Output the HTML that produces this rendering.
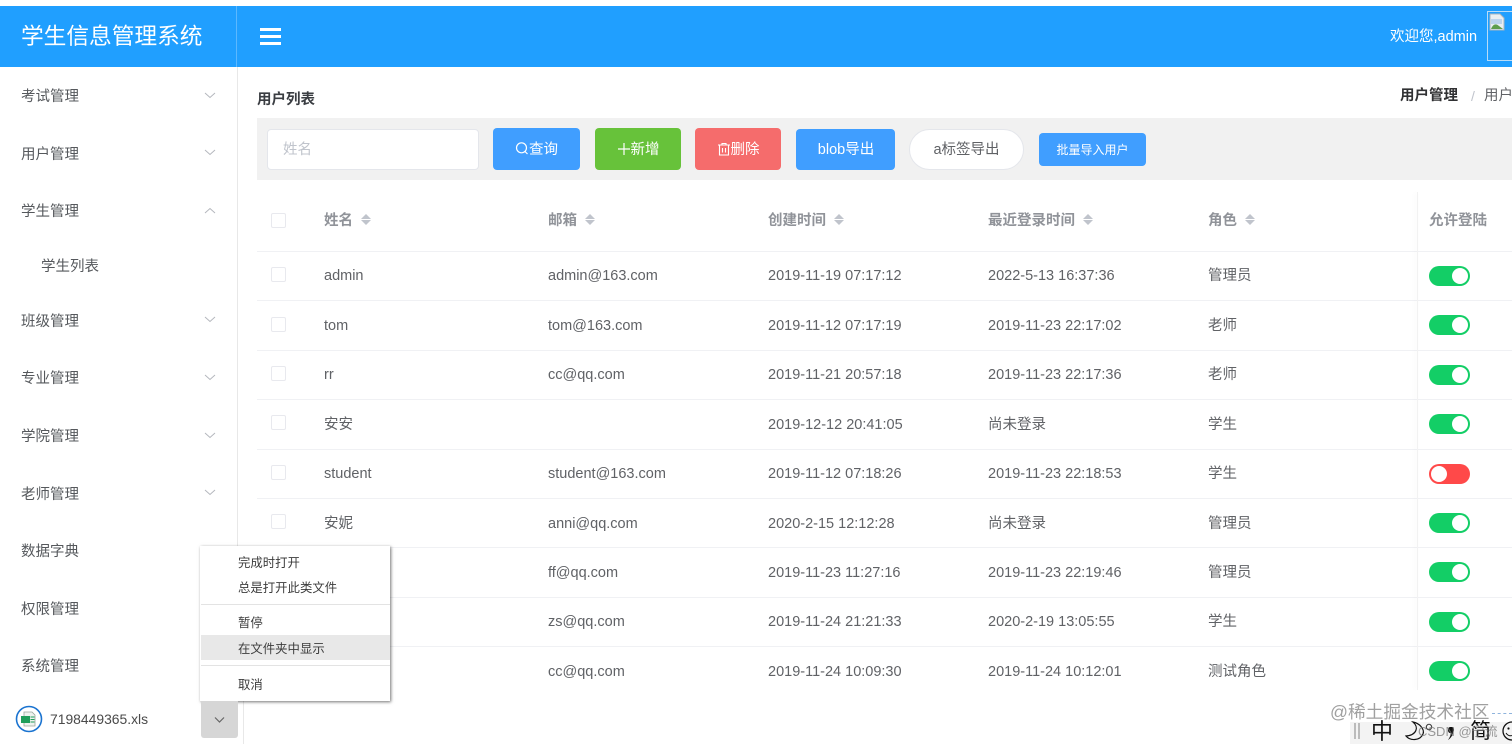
<!DOCTYPE html>
<html lang="zh"><head><meta charset="utf-8"><title>学生信息管理系统</title>
<style>
html,body{margin:0;padding:0;background:#fff;}
body{width:1512px;height:744px;overflow:hidden;position:relative;font-family:"Liberation Sans","Noto Sans CJK SC",sans-serif;color:#606266;}
.a{position:absolute;white-space:nowrap;}
.t{position:absolute;white-space:nowrap;font-size:14.5px;line-height:20px;color:#606266;margin-top:1px;}
.m{position:absolute;left:21px;font-size:14.5px;line-height:20px;color:#55585c;white-space:nowrap;margin-top:1px;}
.h{position:absolute;top:211px;font-size:14.5px;line-height:20px;font-weight:bold;color:#909399;white-space:nowrap;}
.line{position:absolute;left:257px;width:1255px;height:1px;background:#f0f1f4;}
.cb{position:absolute;left:271px;width:13px;height:13px;border:1px solid #e8e9ee;border-radius:2px;background:#fff;}
.sw{position:absolute;left:1429px;width:41px;height:20px;border-radius:10px;background:#13ce66;}
.sw i{position:absolute;left:23px;top:2px;width:16px;height:16px;border-radius:50%;background:#fff;}
.sw.off{background:#ff4949;}.sw.off i{left:2px;}
.btn{position:absolute;border-radius:4px;color:#fff;text-align:center;font-size:14.5px;white-space:nowrap;}
.sort{position:absolute;top:214px;width:0;height:0;}
.sort:before{content:"";position:absolute;left:0;top:0;border:5px solid transparent;border-top:0;border-bottom:5px solid #c0c4cc;}
.sort:after{content:"";position:absolute;left:0;top:6px;border:5px solid transparent;border-bottom:0;border-top:5px solid #c0c4cc;}
.chev{position:absolute;left:204px;}
.ctx{position:absolute;font-size:12.4px;line-height:16px;color:#3c3c3c;left:238px;white-space:nowrap;}
</style></head><body>
<div class="a" style="left:0;top:6px;width:1512px;height:61px;background:#209fff;"></div>
<div class="a" style="left:236px;top:6px;width:1px;height:61px;background:#5cb8ff;"></div>
<div class="a" style="left:21px;top:20px;font-size:22.7px;line-height:32px;color:#fff;">学生信息管理系统</div>
<div class="a" style="left:260px;top:28px;width:21px;height:3px;background:#fff;"></div>
<div class="a" style="left:260px;top:35px;width:21px;height:3px;background:#fff;"></div>
<div class="a" style="left:260px;top:42px;width:21px;height:3px;background:#fff;"></div>
<div class="a" style="left:1390px;top:27px;font-size:14.5px;line-height:20px;color:#fff;">欢迎您,admin</div>
<div class="a" style="left:1487px;top:11px;width:30px;height:50px;border:1px solid #b9dcf7;box-sizing:border-box;"></div>
<svg class="a" style="left:1489px;top:13px;" width="17" height="18" viewBox="0 0 17 18"><path d="M1 1h10l4 4v12H1z" fill="#e8eef2" stroke="#a9b4bd"/><path d="M2 16c2-5 5-6 8-3l4 3z" fill="#5f9e4c"/><path d="M2 6h11v5H2z" fill="#bcd3ec"/></svg>

<div class="a" style="left:237px;top:67px;width:1px;height:480px;background:#e8e8e8;"></div>
<div class="a" style="left:243px;top:700px;width:1px;height:44px;background:#e8e8e8;"></div>

<div class="m" style="top:86px;">考试管理</div>
<div class="m" style="top:144px;">用户管理</div>
<div class="m" style="top:201px;">学生管理</div>
<div class="m" style="top:256px;left:41px;">学生列表</div>
<div class="m" style="top:311px;">班级管理</div>
<div class="m" style="top:368px;">专业管理</div>
<div class="m" style="top:426px;">学院管理</div>
<div class="m" style="top:484px;">老师管理</div>
<div class="m" style="top:541px;">数据字典</div>
<div class="m" style="top:599px;">权限管理</div>
<div class="m" style="top:656px;">系统管理</div>
<svg class="chev" style="top:92px" width="12" height="7" viewBox="0 0 12 7"><path d="M1 1l5 4.500L11 1" fill="none" stroke="#b4b7bd"/></svg>
<svg class="chev" style="top:149px" width="12" height="7" viewBox="0 0 12 7"><path d="M1 1l5 4.500L11 1" fill="none" stroke="#b4b7bd"/></svg>
<svg class="chev" style="top:207px" width="12" height="7" viewBox="0 0 12 7"><path d="M1 6l5-4.500L11 6" fill="none" stroke="#b4b7bd"/></svg>
<svg class="chev" style="top:316px" width="12" height="7" viewBox="0 0 12 7"><path d="M1 1l5 4.500L11 1" fill="none" stroke="#b4b7bd"/></svg>
<svg class="chev" style="top:374px" width="12" height="7" viewBox="0 0 12 7"><path d="M1 1l5 4.500L11 1" fill="none" stroke="#b4b7bd"/></svg>
<svg class="chev" style="top:432px" width="12" height="7" viewBox="0 0 12 7"><path d="M1 1l5 4.500L11 1" fill="none" stroke="#b4b7bd"/></svg>
<svg class="chev" style="top:489px" width="12" height="7" viewBox="0 0 12 7"><path d="M1 1l5 4.500L11 1" fill="none" stroke="#b4b7bd"/></svg>

<div class="a" style="left:257px;top:90px;font-size:14.500px;line-height:20px;font-weight:bold;color:#3a3d42;">用户列表</div>
<div class="a" style="left:1400px;top:86px;font-size:14.500px;line-height:20px;font-weight:bold;color:#303133;">用户管理</div>
<div class="a" style="left:1471px;top:86px;font-size:14px;line-height:20px;color:#c0c4cc;">/</div>
<div class="a" style="left:1484px;top:86px;font-size:14.500px;line-height:20px;color:#606266;">用户列表</div>

<div class="a" style="left:257px;top:118px;width:1255px;height:62px;background:#f1f1f1;"></div>
<div class="a" style="left:267px;top:129px;width:212px;height:41px;box-sizing:border-box;background:#fff;border:1px solid #e4e6eb;border-radius:4px;font-size:14.500px;line-height:40px;padding-left:15px;color:#c0c4cc;">姓名</div>
<div class="btn" style="left:493px;top:128px;width:87px;height:42px;line-height:45px;background:#409eff;"><svg width="14" height="15" viewBox="0 0 14 15" style="vertical-align:-2px"><circle cx="6.500" cy="6.800" r="5" fill="none" stroke="#fff" stroke-width="1.200"/><path d="M10 10.500l2.500 2.500" stroke="#fff" stroke-width="1.200"/></svg>查询</div>
<div class="btn" style="left:595px;top:128px;width:86px;height:42px;line-height:45px;background:#67c23a;"><svg width="14" height="14" viewBox="0 0 14 14" style="vertical-align:-2px"><path d="M7 1v12M1 7h12" stroke="#fff" stroke-width="1.200"/></svg>新增</div>
<div class="btn" style="left:695px;top:128px;width:86px;height:42px;line-height:45px;background:#f56c6c;"><svg width="14" height="14" viewBox="0 0 14 14" style="vertical-align:-2px"><path d="M1 3h12M5 3V1.500h4V3M2.500 3v10h9V3M5.500 6v4.500M8.500 6v4.500" fill="none" stroke="#fff" stroke-width="1.100"/></svg>删除</div>
<div class="btn" style="left:796px;top:129px;width:99px;height:41px;line-height:43px;background:#409eff;text-indent:1px;">blob导出</div>
<div class="btn" style="left:909px;top:129px;width:115px;height:41px;box-sizing:border-box;border:1px solid #e4e6eb;border-radius:21px;line-height:41px;background:#fff;color:#606266;">a标签导出</div>
<div class="btn" style="left:1039px;top:133px;width:107px;height:33px;line-height:34px;background:#409eff;font-size:12px;">批量导入用户</div>

<div class="cb" style="top:213px"></div>
<div class="h" style="left:324px">姓名</div><div class="sort" style="left:361px"></div>
<div class="h" style="left:548px">邮箱</div><div class="sort" style="left:585px"></div>
<div class="h" style="left:768px">创建时间</div><div class="sort" style="left:834px"></div>
<div class="h" style="left:988px">最近登录时间</div><div class="sort" style="left:1083px"></div>
<div class="h" style="left:1208px">角色</div><div class="sort" style="left:1245px"></div>
<div class="h" style="left:1429px">允许登陆</div>

<div class="line" style="top:251px"></div><div class="line" style="top:300px"></div><div class="line" style="top:350px"></div><div class="line" style="top:399px"></div><div class="line" style="top:449px"></div><div class="line" style="top:498px"></div><div class="line" style="top:547px"></div><div class="line" style="top:597px"></div><div class="line" style="top:646px"></div>
<div class="a" style="left:1417px;top:192px;width:1px;height:498px;background:#f2f2f2;box-shadow:-2px 0 4px rgba(0,0,0,.05);"></div>

<div class="cb" style="top:267px"></div><div class="t" style="left:324px;top:265px">admin</div><div class="t" style="left:548px;top:265px">admin@163.com</div><div class="t" style="left:768px;top:265px">2019-11-19 07:17:12</div><div class="t" style="left:988px;top:265px">2022-5-13 16:37:36</div><div class="t" style="left:1208px;top:265px">管理员</div><div class="sw" style="top:266px"><i></i></div>
<div class="cb" style="top:317px"></div><div class="t" style="left:324px;top:315px">tom</div><div class="t" style="left:548px;top:315px">tom@163.com</div><div class="t" style="left:768px;top:315px">2019-11-12 07:17:19</div><div class="t" style="left:988px;top:315px">2019-11-23 22:17:02</div><div class="t" style="left:1208px;top:315px">老师</div><div class="sw" style="top:315px"><i></i></div>
<div class="cb" style="top:366px"></div><div class="t" style="left:324px;top:364px">rr</div><div class="t" style="left:548px;top:364px">cc@qq.com</div><div class="t" style="left:768px;top:364px">2019-11-21 20:57:18</div><div class="t" style="left:988px;top:364px">2019-11-23 22:17:36</div><div class="t" style="left:1208px;top:364px">老师</div><div class="sw" style="top:365px"><i></i></div>
<div class="cb" style="top:415px"></div><div class="t" style="left:324px;top:414px">安安</div><div class="t" style="left:768px;top:414px">2019-12-12 20:41:05</div><div class="t" style="left:988px;top:414px">尚未登录</div><div class="t" style="left:1208px;top:414px">学生</div><div class="sw" style="top:414px"><i></i></div>
<div class="cb" style="top:465px"></div><div class="t" style="left:324px;top:463px">student</div><div class="t" style="left:548px;top:463px">student@163.com</div><div class="t" style="left:768px;top:463px">2019-11-12 07:18:26</div><div class="t" style="left:988px;top:463px">2019-11-23 22:18:53</div><div class="t" style="left:1208px;top:463px">学生</div><div class="sw off" style="top:464px"><i></i></div>
<div class="cb" style="top:514px"></div><div class="t" style="left:324px;top:513px">安妮</div><div class="t" style="left:548px;top:513px">anni@qq.com</div><div class="t" style="left:768px;top:513px">2020-2-15 12:12:28</div><div class="t" style="left:988px;top:513px">尚未登录</div><div class="t" style="left:1208px;top:513px">管理员</div><div class="sw" style="top:513px"><i></i></div>
<div class="t" style="left:548px;top:562px">ff@qq.com</div><div class="t" style="left:768px;top:562px">2019-11-23 11:27:16</div><div class="t" style="left:988px;top:562px">2019-11-23 22:19:46</div><div class="t" style="left:1208px;top:562px">管理员</div><div class="sw" style="top:562px"><i></i></div>
<div class="t" style="left:548px;top:611px">zs@qq.com</div><div class="t" style="left:768px;top:611px">2019-11-24 21:21:33</div><div class="t" style="left:988px;top:611px">2020-2-19 13:05:55</div><div class="t" style="left:1208px;top:611px">学生</div><div class="sw" style="top:612px"><i></i></div>
<div class="t" style="left:548px;top:661px">cc@qq.com</div><div class="t" style="left:768px;top:661px">2019-11-24 10:09:30</div><div class="t" style="left:988px;top:661px">2019-11-24 10:12:01</div><div class="t" style="left:1208px;top:661px">测试角色</div><div class="sw" style="top:661px"><i></i></div>

<!-- context menu -->
<div class="a" style="left:200px;top:546px;width:190px;height:155px;background:#fff;box-shadow:1px 1px 3px rgba(0,0,0,.55);"></div>
<div class="a" style="left:201px;top:635px;width:189px;height:25px;background:#e8e8e8;"></div>
<div class="a" style="left:201px;top:604px;width:189px;height:1px;background:#e3e3e3;"></div>
<div class="a" style="left:201px;top:665px;width:189px;height:1px;background:#e3e3e3;"></div>
<div class="ctx" style="top:555px">完成时打开</div>
<div class="ctx" style="top:580px">总是打开此类文件</div>
<div class="ctx" style="top:615px">暂停</div>
<div class="ctx" style="top:641px">在文件夹中显示</div>
<div class="ctx" style="top:677px">取消</div>

<!-- download bar -->
<svg class="a" style="left:15px;top:705px;" width="29" height="29" viewBox="0 0 29 29"><circle cx="14" cy="14" r="12.500" fill="#fff" stroke="#1a73d0" stroke-width="1.600"/><path d="M9 7h8l3 3v11H9z" fill="#eef2ee" stroke="#9aa59c" stroke-width=".8"/><rect x="6" y="11" width="9" height="7" fill="#1e9e5a"/><path d="M15.500 12h4M15.500 14.500h4M15.500 17h4" stroke="#1e9e5a"/></svg>
<div class="a" style="left:50px;top:709px;font-size:13.900px;line-height:20px;color:#4a4a4a;font-family:'Liberation Sans',sans-serif;">7198449365.xls</div>
<div class="a" style="left:201px;top:701px;width:37px;height:37px;background:#d6d6d6;border-radius:0 0 3px 3px;"></div>
<svg class="a" style="left:213px;top:716px;" width="13" height="8" viewBox="0 0 13 8"><path d="M2 1.500l4.500 4.500L11 1.500" fill="none" stroke="#666" stroke-width="1.200"/></svg>

<!-- ime bar & watermark -->
<div class="a" style="left:1350px;top:722px;width:162px;height:22px;background:#f3f3f3;"></div>
<div class="a" style="left:1354px;top:723px;width:2px;height:16px;background:#bbb;"></div><div class="a" style="left:1358px;top:723px;width:2px;height:16px;background:#bbb;"></div>
<div class="a" style="left:1371px;top:719px;font-size:22px;line-height:26px;color:#111;">中</div>
<svg class="a" style="left:1404px;top:721px;" width="24" height="22" viewBox="0 0 24 22"><path d="M9 1C15 6 13 14 2 15C6 20 16 20 19 13C21 8 15 2 9 1z" fill="none" stroke="#111" stroke-width="1.200"/></svg>
<svg class="a" style="left:1425px;top:723px;" width="8" height="8" viewBox="0 0 8 8"><circle cx="4" cy="4" r="2.700" fill="none" stroke="#333"/></svg>
<svg class="a" style="left:1446px;top:727px;" width="10" height="14" viewBox="0 0 10 14"><path d="M2 3a3 3 0 1 1 5 2C7 8 5 11 2 13C4 10 5 8 4.500 6C3 6 2 5 2 3z" fill="#111"/></svg>
<div class="a" style="left:1470px;top:719px;font-size:21px;line-height:26px;color:#111;">简</div>
<svg class="a" style="left:1502px;top:721px;" width="20" height="20" viewBox="0 0 20 20"><circle cx="10" cy="10" r="9" fill="none" stroke="#111" stroke-width="1.300"/><circle cx="6.500" cy="7.500" r="1.100" fill="#111"/><path d="M4 12c2 3 5 4 9 1" fill="none" stroke="#111"/></svg>
<div class="a" style="left:1330px;top:701px;font-size:17.700px;line-height:22px;color:#a0a0a0;">@稀土掘金技术社区</div>
<div class="a" style="left:1492px;top:713px;width:20px;border-top:1px dashed #8fb4dd;"></div>
<div class="a" style="left:1418px;top:724px;font-size:13px;line-height:16px;color:rgba(120,120,120,.75);">CSDN @宁流</div>
</body></html>
